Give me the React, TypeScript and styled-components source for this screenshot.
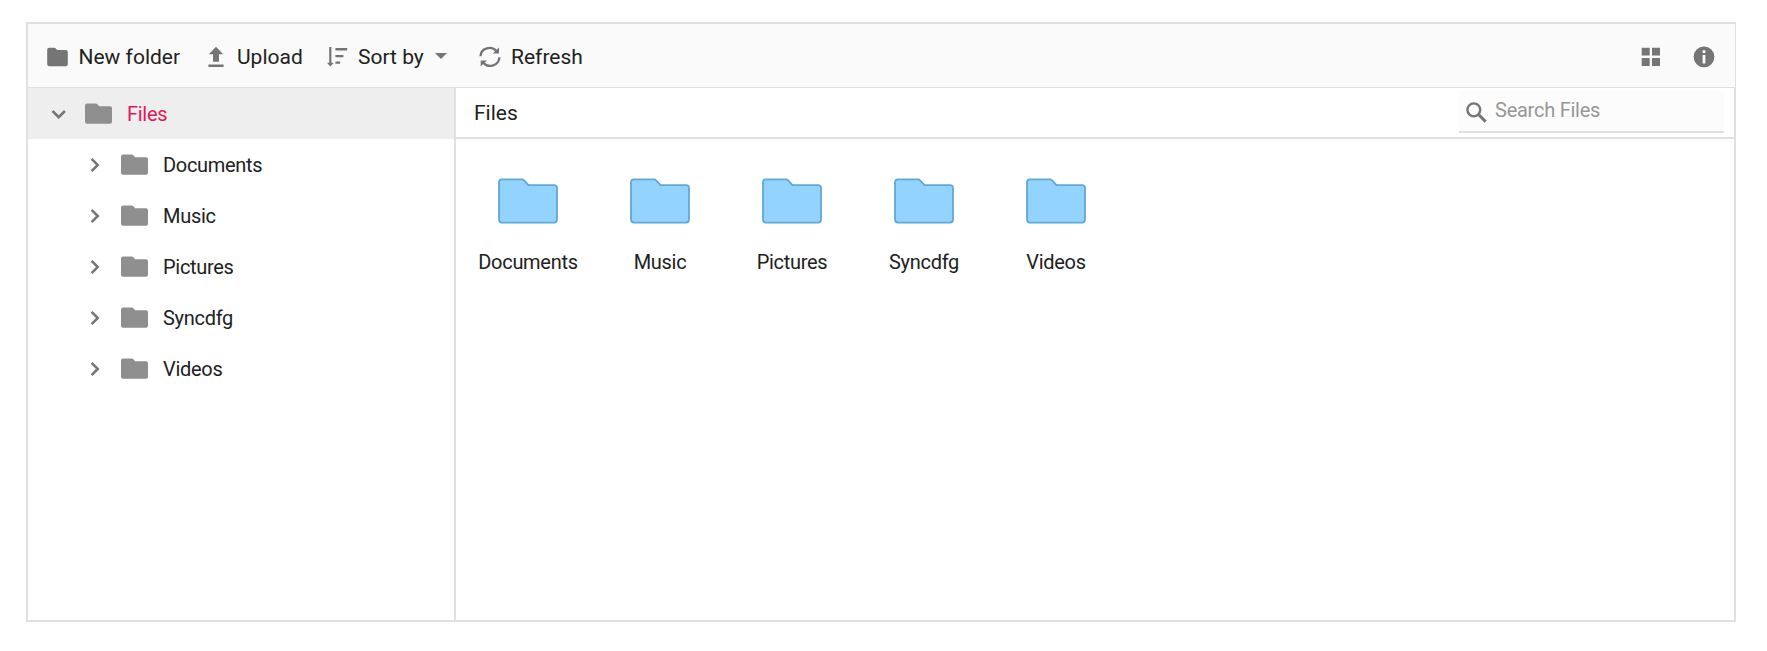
import React from "react";
import styled, { createGlobalStyle } from "styled-components";

const GlobalStyle = createGlobalStyle`
  * { box-sizing: border-box; }
  body {
    margin: 0;
    background: #fff;
    color: #212121;
    font-family: Roboto, "Liberation Sans", sans-serif;
    font-size: 20px;
    letter-spacing: -0.3px;
  }
`;

const Page = styled.main`
  padding: 22px 31px 0 26px;
`;

const Manager = styled.section`
  display: flex;
  flex-direction: column;
  height: 600px;
  border: 2px solid #e0e0e0;
  border-right-width: 1px;
`;

const Toolbar = styled.header`
  display: flex;
  align-items: center;
  justify-content: space-between;
  flex: none;
  height: 64px;
  padding: 2px 20px 0 19px;
  background: #fafafa;
  border-bottom: 1px solid #e0e0e0;
`;

const ToolGroup = styled.div<{ $gap?: number }>`
  display: flex;
  align-items: center;
  gap: ${(p) => p.$gap ?? 0}px;
`;

const ToolButton = styled.button<{ $width?: number; $gap: number }>`
  display: flex;
  align-items: center;
  gap: ${(p) => p.$gap}px;
  width: ${(p) => (p.$width ? `${p.$width}px` : "auto")};
  height: 40px;
  padding: 0;
  border: 0;
  background: none;
  color: inherit;
  font: inherit;
  font-size: 21px;
  letter-spacing: 0;
  white-space: nowrap;
`;

const Icon = styled.svg`
  display: block;
  flex: none;
  color: #757575;
  fill: currentColor;
`;

const Caret = styled(Icon)`
  margin: -2px 0 0 1px;
`;

const Body = styled.div`
  display: flex;
  flex: 1;
  min-height: 0;
  border-right: 1px solid #e0e0e0;
`;

const Tree = styled.nav`
  flex: none;
  width: 428px;
  border-right: 2px solid #e0e0e0;
`;

const TreeRow = styled.div<{ $root?: boolean }>`
  display: flex;
  align-items: center;
  height: 51px;
  padding-left: ${(p) => (p.$root ? 20 : 56)}px;
  background: ${(p) => (p.$root ? "#eeeeee" : "transparent")};
  color: ${(p) => (p.$root ? "#e3165b" : "inherit")};
`;

const TreeFolder = styled(Icon)`
  margin: 1px 14px 0 17px;
  color: #8f8f8f;
`;

const Content = styled.div`
  flex: 1;
  min-width: 0;
`;

const AddressBar = styled.div`
  display: flex;
  justify-content: space-between;
  height: 51px;
  padding: 2px 10px 0 18px;
  border-bottom: 2px solid #e0e0e0;
`;

const Crumb = styled.span`
  font-size: 21px;
  line-height: 46px;
  letter-spacing: 0;
`;

const Search = styled.label`
  display: flex;
  align-items: center;
  width: 265px;
  height: 43px;
  padding: 0 0 0 7px;
  gap: 8px;
  background: #fcfcfc;
  border-bottom: 2px solid #e0e0e0;
`;

const SearchIcon = styled(Icon)`
  margin-top: 4px;
`;

const SearchInput = styled.input`
  flex: 1;
  min-width: 0;
  padding: 0;
  margin-top: -1px;
  border: 0;
  outline: 0;
  background: none;
  font: inherit;
  letter-spacing: -0.25px;
  &::placeholder {
    color: #979797;
    opacity: 1;
  }
`;

const Grid = styled.div`
  display: flex;
  padding: 39px 0 0 6px;
`;

const Tile = styled.div`
  display: flex;
  flex-direction: column;
  align-items: center;
  width: 132px;
`;

const TileLabel = styled.span`
  margin-top: 26px;
  line-height: 24px;
`;

const folders = ["Documents", "Music", "Pictures", "Syncdfg", "Videos"];

const Chevron = ({ open }: { open?: boolean }) => (
  <Icon width="20" height="20" viewBox="0 0 20 20" aria-hidden>
    <path
      d={open ? "M4.5 7L10.7 13.2L16.9 7" : "M7.6 3.8L13.8 10L7.6 16.2"}
      fill="none"
      stroke="currentColor"
      strokeWidth="2.5"
    />
  </Icon>
);

const SmallFolder = () => (
  <TreeFolder width="28" height="22" viewBox="0 0 28 22" aria-hidden>
    <path d="M2 .5H10.8Q11.5 .5 12.1 1.1L14.2 3.2H25Q27 3.2 27 5.2V18.8Q27 20.8 25 20.8H2Q0 20.8 0 18.8V2.5Q0 .5 2 .5Z" />
  </TreeFolder>
);

const LargeFolder = () => (
  <svg width="60" height="46" viewBox="0 0 60 46" aria-hidden>
    <path
      d="M4 1.3H24.2Q25 1.3 25.6 1.9L30.5 7.1H56Q59 7.1 59 10.1V41.6Q59 44.6 56 44.6H4Q1 44.6 1 41.6V4.3Q1 1.3 4 1.3Z"
      fill="#92d4ff"
      stroke="#62a8d4"
      strokeWidth="1.8"
      strokeLinejoin="round"
    />
  </svg>
);

export default function App() {
  return (
    <>
      <GlobalStyle />
      <Page>
        <Manager>
          <Toolbar>
            <ToolGroup>
              <ToolButton $width={161} $gap={10.5}>
                <Icon width="21" height="20" viewBox="0 0 21 20">
                  <path d="M2.2.8H7.4Q8 .8 8.5 1.3L10.3 3.1H18.8Q20.8 3.1 20.8 5.1V17.2Q20.8 19.2 18.8 19.2H2.2Q.2 19.2.2 17.2V2.8Q.2.8 2.2.8Z" />
                </Icon>
                New folder
              </ToolButton>
              <ToolButton $width={119} $gap={13}>
                <Icon width="16" height="22" viewBox="0 0 16 22">
                  <path d="M8 .7L15.2 8.2H11V15.7H5V8.2H.8ZM.4 18.6H15.6V21H.4Z" />
                </Icon>
                Upload
              </ToolButton>
              <ToolButton $width={152} $gap={10}>
                <Icon width="21" height="20" viewBox="0 0 21 20">
                  <path d="M2.2 0H4.4V15.7H6.8L3.3 19.4L0 15.7H2.2ZM8.4 1.1H20.2V3.5H8.4ZM8.4 7.9H16.4V10.2H8.4ZM8.4 14.4H13.2V16.7H8.4Z" />
                </Icon>
                Sort by
                <Caret width="12" height="6" viewBox="0 0 12 6">
                  <path d="M0 0H12L6 6Z" />
                </Caret>
              </ToolButton>
              <ToolButton $gap={10}>
                <Icon width="22" height="22" viewBox="0 0 22 22">
                  <path
                    d="M1.5 10.2C1.8 2.3 12.5-.9 17.5 5.2M20.4 11.3C20 19.5 9.4 22.7 4.4 16.7"
                    fill="none"
                    stroke="currentColor"
                    strokeWidth="2.3"
                  />
                  <path d="M20 1.4V7.4H13.8ZM1.7 20.5V14.5H7.9Z" />
                </Icon>
                Refresh
              </ToolButton>
            </ToolGroup>
            <ToolGroup $gap={32}>
              <ToolButton $gap={0} aria-label="View">
                <Icon width="20" height="20" viewBox="0 0 20 20">
                  <path d="M.7 .7H8.7V8.5H.7ZM11 .7H19V8.5H11ZM.7 11.1H8.7V18.9H.7ZM11 11.1H19V18.9H11Z" />
                </Icon>
              </ToolButton>
              <ToolButton $gap={0} aria-label="Details">
                <Icon width="22" height="22" viewBox="0 0 22 22">
                  <path
                    fillRule="evenodd"
                    d="M11 .4A10.4 10.4 0 1 0 11 21.2A10.4 10.4 0 1 0 11 .4ZM9.6 4.2H12.4V7H9.6ZM9.6 9H12.4V17.4H9.6Z"
                  />
                </Icon>
              </ToolButton>
            </ToolGroup>
          </Toolbar>
          <Body>
            <Tree>
              <TreeRow $root>
                <Chevron open />
                <SmallFolder />
                Files
              </TreeRow>
              {folders.map((name) => (
                <TreeRow key={name}>
                  <Chevron />
                  <SmallFolder />
                  {name}
                </TreeRow>
              ))}
            </Tree>
            <Content>
              <AddressBar>
                <Crumb>Files</Crumb>
                <Search>
                  <SearchIcon width="21" height="21" viewBox="0 0 21 21">
                    <circle cx="7.8" cy="7.8" r="6.4" fill="none" stroke="currentColor" strokeWidth="2.4" />
                    <path d="M12.3 12.3L19.6 19.6" stroke="currentColor" strokeWidth="3" />
                  </SearchIcon>
                  <SearchInput placeholder="Search Files" />
                </Search>
              </AddressBar>
              <Grid>
                {folders.map((name) => (
                  <Tile key={name}>
                    <LargeFolder />
                    <TileLabel>{name}</TileLabel>
                  </Tile>
                ))}
              </Grid>
            </Content>
          </Body>
        </Manager>
      </Page>
    </>
  );
}
